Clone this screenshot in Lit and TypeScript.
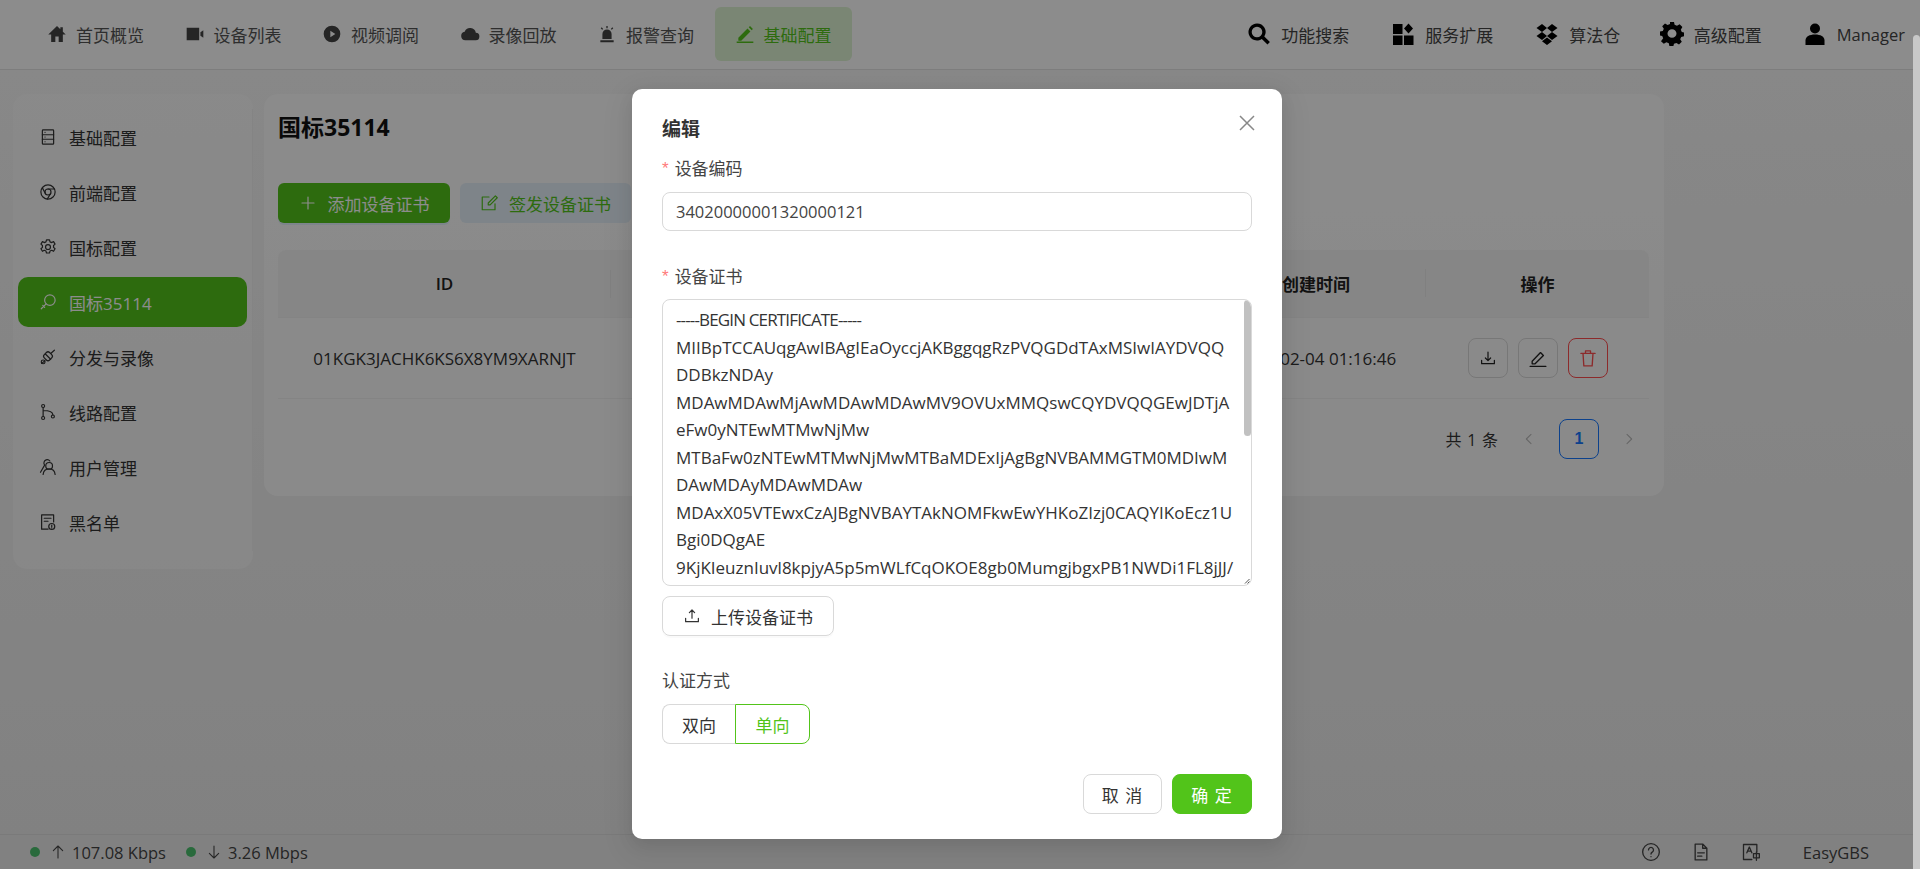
import { LitElement, html, css, svg } from "lit";
import { customElement } from "lit/decorators.js";

const fill = (inner: unknown, size = 20) => html`<svg class="ic" width=${size} height=${size} viewBox="0 0 24 24" fill="currentColor">${inner}</svg>`;
const line = (inner: unknown, size = 18) => html`<svg class="ic" width=${size} height=${size} viewBox="0 0 24 24" fill="none" stroke="currentColor" stroke-width="1.6" stroke-linecap="round" stroke-linejoin="round">${inner}</svg>`;

const nav = [
  ["首页概览", fill(svg`<path d="M12 2.5 1.5 12.5H5V21.5h5v-6.5h4v6.5h5V12.5h3.5L19 9.2V4h-3v2.4z"/>`)],
  ["设备列表", fill(svg`<path d="M2 4.5h15v15H2z"/><path d="M18.5 10 22 7.5v9L18.5 14z"/>`)],
  ["视频调阅", fill(svg`<path fill-rule="evenodd" d="M12 2a10 10 0 1 0 0 20 10 10 0 0 0 0-20zM10 8l6 4-6 4z"/>`)],
  ["录像回放", fill(svg`<path d="M19 10.5A7 7 0 0 0 5.6 9.2 5.2 5.2 0 0 0 6.5 19.5h12a4.5 4.5 0 0 0 .5-9z"/>`)],
  ["报警查询", fill(svg`<path fill-rule="evenodd" d="M6.500 18V12a5.500 5.500 0 0 1 11 0v6zM4 19.500h16V22H4z"/><path d="M11.200 2.500h1.600V5h-1.600zM4.500 5l1.200-1 1.700 2-1.200 1zM19.500 5l-1.200-1-1.700 2 1.200 1z"/>`)],
  ["基础配置", fill(svg`<path d="M4 16.500 15 5.500l3.500 3.500L7.500 20H4zM16.500 4l1.500-1.500L21.500 6 20 7.500z" /><path d="M2 21h20v1.800H2z"/>`)],
];
const navRight = [
  ["功能搜索", fill(svg`<path fill-rule="evenodd" d="M10 1.500a8.500 8.500 0 1 0 4.800 15.500l5.700 5.500 2.400-2.400-5.600-5.600A8.500 8.500 0 0 0 10 1.500zm0 3.200a5.300 5.300 0 1 1 0 10.600 5.300 5.300 0 0 1 0-10.600z"/>`, 24)],
  ["服务扩展", fill(svg`<path d="M2 2h9.500v10H2zM2 13.500h9.500V23H2zM13 13.500h9.500V23H13zM17.500 1.500l4.500 5-4.500 5-4.500-5z"/>`, 24)],
  ["算法仓", fill(svg`<path d="M7 2 1.500 6 7 10l5-4zM17 2l-5 4 5 4 5.500-4zM1.500 14 7 18l5-4-5-4zM22.500 14 17 10l-5 4 5 4zM12 15.500l-5 3.800 5 3.700 5-3.700z"/>`, 24)],
  ["高级配置", fill(svg`<path fill-rule="evenodd" d="M10 1h4l.6 3 2.400 1 2.600-1.600 2.800 2.800L20.800 9l1 2.400 2.200.6v4l-2.800.6-1 2.400 1.600 2.600-2.800 2.800-2.600-1.600-2.400 1-.6 2.200h-4l-.6-2.800-2.400-1-2.600 1.600-2.800-2.800L3.200 18l-1-2.400L0 15v-4l2.800-.6 1-2.400L2.200 5.400 5 2.600 7.600 4.200 10 3.200zM12 8.500a4.500 4.500 0 1 0 0 9 4.500 4.500 0 0 0 0-9z" transform="translate(0 -1) scale(1 .96)"/>`, 24)],
  ["Manager", fill(svg`<circle cx="12" cy="6.500" r="5"/><path d="M2.500 23v-4.500c0-4 4-6 9.500-6s9.500 2 9.500 6V23z"/>`, 24)],
];
const side = [
  ["基础配置", line(svg`<rect x="4.500" y="2.500" width="15" height="19" rx="1"/><path d="M4.500 9h15M4.500 15h15M8 5.800h.1M8 12h.1M8 18.300h.1"/>`)],
  ["前端配置", line(svg`<circle cx="12" cy="12" r="9.500"/><circle cx="12" cy="12" r="4"/><path d="M12 8h8.500M8.500 14 4.500 6.500M15.500 14l-4.500 7.500"/>`)],
  ["国标配置", line(svg`<path d="M10 2.500h4l.7 2.600 2.300 1 2.400-1.300 2 3.400-2 1.800v2.500l2 1.800-2 3.400-2.400-1.300-2.300 1-.7 2.600h-4l-.7-2.600-2.300-1-2.400 1.300-2-3.400 2-1.800V10l-2-1.800 2-3.400 2.400 1.300 2.300-1z"/><circle cx="12" cy="12" r="3.300"/>`)],
  ["国标35114", line(svg`<circle cx="14.500" cy="9.500" r="7"/><path d="M9.500 14.500 3 21M5 16.500l2.500 2.500"/>`)],
  ["分发与录像", line(svg`<path d="M8.500 8 15.500 15M8 17 3.500 20.500M16 7l4.500-4"/><rect x="7" y="6" width="10" height="10" rx="3" transform="rotate(-45 12 11)"/><circle cx="5.500" cy="18.500" r="2.500"/>`)],
  ["线路配置", line(svg`<circle cx="5.500" cy="4" r="2"/><circle cx="5.500" cy="20" r="2"/><circle cx="18.500" cy="18" r="2"/><path d="M5.500 6v12M5.500 10c6 0 13 1 13 6"/>`)],
  ["用户管理", line(svg`<circle cx="13.500" cy="10.500" r="4.500"/><path d="M5.500 22c.5-5 3.500-7.500 8-7.500s7.500 2.500 8 7.500M9.500 2.500a4.500 4.500 0 0 1 5 1.500M9.500 2.500a4.500 4.500 0 0 0-2 7L2 19"/>`)],
  ["黑名单", line(svg`<path d="M12 21.500H3.500v-19h16V12M7 7h9M7 11h5"/><circle cx="17" cy="18" r="4"/><path d="M17 16v2.500M17 20v.1"/>`)],
];
const cert = [
  "-----BEGIN CERTIFICATE-----",
  "MIIBpTCCAUqgAwIBAgIEaOyccjAKBggqgRzPVQGDdTAxMSIwIAYDVQQ",
  "DDBkzNDAy",
  "MDAwMDAwMjAwMDAwMDAwMV9OVUxMMQswCQYDVQQGEwJDTjA",
  "eFw0yNTEwMTMwNjMw",
  "MTBaFw0zNTEwMTMwNjMwMTBaMDExIjAgBgNVBAMMGTM0MDIwM",
  "DAwMDAyMDAwMDAw",
  "MDAxX05VTEwxCzAJBgNVBAYTAkNOMFkwEwYHKoZIzj0CAQYIKoEcz1U",
  "Bgi0DQgAE",
  "9KjKIeuznIuvl8kpjyA5p5mWLfCqOKOE8gb0MumgjbgxPB1NWDi1FL8jJJ/",
];

@customElement("app-root")
export class AppRoot extends LitElement {
  static styles = css`
    :host { display: block; width: 1920px; height: 869px; overflow: hidden; position: relative; background: #f3f3f3;
      font-family: "Open Sans", "Noto Sans CJK SC", sans-serif; color: #333; font-size: 17px; }
    * { box-sizing: border-box; }
    .ic { display: block; flex: none; }
    .page { height: 869px; display: flex; flex-direction: column; }
    header { height: 70px; flex: none; background: #fff; border-bottom: 1px solid #e4e4e4; display: flex; justify-content: space-between; padding: 7px 15px 0 27px; }
    .left, .right { display: flex; height: 54px; }
    .nav { width: 137.500px; display: flex; align-items: center; padding-left: 20px; gap: 9px; border-radius: 6px; color: #555; white-space: nowrap; }
    .nav .ic { color: #444; }
    .nav.on { background: #dff5d3; color: #52c41a; }
    .nav.on .ic { color: #52c41a; }
    .rnav { display: flex; align-items: center; gap: 10px; color: #444; white-space: nowrap; padding-right: 42px; }
    .rnav:nth-child(3) { padding-right: 39.500px; }
    .rnav:nth-child(4) { padding-right: 41px; }
    .rnav:last-child { padding-right: 0; font-size: 16.500px; }
    .rnav .ic { color: #000; }
    main { flex: 1; display: flex; gap: 11px; padding: 24px 0 0 13px; align-items: flex-start; background: linear-gradient(#f7f7f7, #ececec); }
    .sidebar { width: 240px; height: 475px; background: rgba(255,255,255,.45); border-radius: 14px; padding: 18px 5px 0; display: flex; flex-direction: column; gap: 5px; flex: none; position: relative; }
    .sidebar::after { content: ""; position: absolute; right: 0; top: 15px; bottom: 18px; width: 1px; background: #f0f0f0; }
    .mi { height: 50px; display: flex; align-items: center; gap: 12px; padding-left: 21px; border-radius: 10px; color: #333; width: 229px; flex: none; }
    .mi.on { background: #52c41a; color: #fff; }
    .card { width: 1400px; height: 402px; background: rgba(255,255,255,.75); border-radius: 14px; padding: 18px 14px 0; flex: none; }
    h2 { margin: 0; font-size: 23px; font-weight: 700; line-height: 30px; color: #111; }
    .tools { display: flex; gap: 10px; margin-top: 41px; }
    .btn { height: 40px; border-radius: 6px; display: flex; align-items: center; justify-content: center; gap: 11px; }
    .add { width: 172px; background: #52c41a; color: #fff; box-shadow: 0 2px 0 rgba(5,145,255,.1); }
    .sign { width: 171px; background: #e6f0fa; color: #52c41a; }
    .table { margin-top: 27px; width: 1371px; }
    .tr { display: grid; grid-template-columns: 333px 595px 220px 223px; align-items: center; text-align: center; }
    .th { height: 68px; background: #f5f5f5; border-bottom: 1px solid #f0f0f0; font-weight: 600; color: #222; border-radius: 8px 8px 0 0; }
    .th > div { position: relative; min-height: 24px; }
    .th > div:not(:last-child)::after { content: ""; position: absolute; right: 0; top: -2px; height: 28px; width: 1px; background: #eaeaea; }
    .td { height: 81px; border-bottom: 1px solid #f0f0f0; color: #333; }
    .ops { display: flex; gap: 10px; justify-content: center; padding-left: 1px; margin-top: -1px; }
    .op { width: 40px; height: 40px; border: 1px solid #d9d9d9; border-radius: 8px; display: flex; align-items: center; justify-content: center; color: #222; }
    .op.del { border-color: #ff4d4f; color: #ff4d4f; }
    .pager { display: flex; align-items: center; height: 40px; margin-top: 20px; justify-content: flex-end; color: #333; padding-right: 11px; font-size: 16px; }
    .pager .total { margin-right: 21px; word-spacing: 1.500px; }
    .chev { width: 20px; display: flex; justify-content: center; color: #bbb; }
    .cur { width: 40px; height: 40px; border: 1px solid #1677ff; color: #1677ff; border-radius: 8px; display: flex; align-items: center; justify-content: center; font-weight: 600; margin: 0 20px; font-family: "Liberation Sans", sans-serif; font-size: 16px; }
    footer { height: 35px; flex: none; background: #ececec; border-top: 1px solid #dedede; display: flex; justify-content: space-between; align-items: center; padding: 0 51px 0 30px; color: #444; font-weight: 500; font-size: 16.500px; }
    .fl, .fr { display: flex; align-items: center; }
    .dot { width: 10px; height: 10px; border-radius: 50%; background: #4cc26e; margin-right: 10px; }
    .rate { display: flex; align-items: center; gap: 6px; margin-right: 20px; }
    .fr .ic { color: #444; margin-right: 30px; }
    .fr .brand { margin-left: 12px; font-weight: 500; }

    .mask { position: absolute; inset: 0; background: rgba(0,0,0,.45); display: flex; justify-content: center; align-items: flex-start; padding: 89px 6px 0 0; }
    .modal { width: 650px; height: 750px; background: #fff; border-radius: 10px; padding: 30px; position: relative; box-shadow: 0 6px 16px rgba(0,0,0,.08), 0 9px 28px 8px rgba(0,0,0,.05); display: flex; flex-direction: column; }
    .close { position: absolute; right: 25px; top: 24px; color: #888; }
    .title { font-size: 19px; font-weight: 700; line-height: 20px; color: #333; }
    .label { display: flex; align-items: center; gap: 6px; color: #444; line-height: 24px; height: 24px; flex: none; }
    .label i { color: #ff7a7a; font-style: normal; font-family: "Liberation Sans", sans-serif; font-size: 17px; }
    .l1 { margin-top: 18px; }
    .input { margin-top: 11px; height: 39px; border: 1px solid #d9d9d9; border-radius: 8px; display: flex; align-items: center; padding: 0 13px; color: #444; flex: none; font-size: 16.500px; }
    .l2 { margin-top: 34px; }
    .area { margin-top: 10px; height: 287px; border: 1px solid #d9d9d9; border-radius: 8px; padding: 6px 13px 0; overflow: hidden; position: relative; flex: none; color: #333; }
    .ln { line-height: 27.500px; white-space: nowrap; }
    .ln.head { letter-spacing: -.85px; }
    .thumb { position: absolute; right: 0; top: 0; width: 7px; height: 136px; background: #c1c1c1; border-radius: 4px; }
    .grip { position: absolute; right: 1px; bottom: 1px; width: 6px; height: 6px; }
    .upload { margin-top: 10px; width: 172px; height: 40px; border: 1px solid #d9d9d9; border-radius: 8px; display: flex; align-items: center; justify-content: center; gap: 10px; color: #333; flex: none; box-shadow: 0 2px 0 rgba(0,0,0,.02); }
    .l3 { margin-top: 33px; }
    .radio { margin-top: 11px; display: flex; width: 148px; height: 40px; flex: none; }
    .radio div { display: flex; align-items: center; justify-content: center; border: 1px solid #d9d9d9; }
    .radio .a { width: 73px; border-right: none; border-radius: 8px 0 0 8px; color: #333; }
    .radio .b { width: 75px; border-color: #52c41a; color: #52c41a; border-radius: 0 8px 8px 0; }
    .foot { display: flex; justify-content: flex-end; gap: 10px; margin-top: 30px; }
    .foot div { height: 40px; width: 79px; border: 1px solid #d9d9d9; border-radius: 8px; display: flex; align-items: center; justify-content: center; letter-spacing: 1px; color: #333; }
    .foot .ok { width: 80px; background: #52c41a; border-color: #52c41a; color: #fff; }
    .sb { position: absolute; right: 0; top: 35px; bottom: 0; width: 7px; background: #c8c8c8; border-radius: 4px 4px 0 0; }
  `;

  render() {
    return html`
      <div class="page">
        <header>
          <div class="left">
            ${nav.map(([t, i], n) => html`<div class="nav ${n === 5 ? "on" : ""}">${i}<span>${t}</span></div>`)}
          </div>
          <div class="right">
            ${navRight.map(([t, i]) => html`<div class="rnav">${i}<span>${t}</span></div>`)}
          </div>
        </header>
        <main>
          <aside class="sidebar">
            ${side.map(([t, i], n) => html`<div class="mi ${n === 3 ? "on" : ""}">${i}<span>${t}</span></div>`)}
          </aside>
          <section class="card">
            <h2>国标35114</h2>
            <div class="tools">
              <div class="btn add">${line(svg`<path d="M12 4v16M4 12h16"/>`, 18)}<span>添加设备证书</span></div>
              <div class="btn sign">${line(svg`<path d="M20 13v8H3V4h9M20.500 2.500 11 12v2.500h2.500L23 5z"/>`, 18)}<span>签发设备证书</span></div>
            </div>
            <div class="table">
              <div class="tr th"><div>ID</div><div></div><div>创建时间</div><div>操作</div></div>
              <div class="tr td">
                <div>01KGK3JACHK6KS6X8YM9XARNJT</div>
                <div></div>
                <div>2026-02-04 01:16:46</div>
                <div class="ops">
                  <div class="op">${line(svg`<path d="M12 4v11M8.500 12l3.500 3.500 3.500-3.500M3.500 15v4.500h17V15"/>`, 18)}</div>
                  <div class="op">${line(svg`<path d="M5 16 15 5.500 18.500 9 8.500 19H5zM2.500 22h19"/>`, 20)}</div>
                  <div class="op del">${line(svg`<path d="M3.500 6.500h17M9 6.500v-3h6v3M6 6.500l1 15h10l1-15"/>`, 20)}</div>
                </div>
              </div>
            </div>
            <div class="pager">
              <span class="total">共 1 条</span>
              <span class="chev">${line(svg`<path d="M15 5l-7 7 7 7"/>`, 16)}</span>
              <span class="cur">1</span>
              <span class="chev">${line(svg`<path d="M9 5l7 7-7 7"/>`, 16)}</span>
            </div>
          </section>
        </main>
        <footer>
          <div class="fl">
            <span class="dot"></span>
            <span class="rate">${line(svg`<path d="M12 21V3M5 10l7-7 7 7"/>`, 16)}<span>107.08 Kbps</span></span>
            <span class="dot"></span>
            <span class="rate">${line(svg`<path d="M12 3v18M5 14l7 7 7-7"/>`, 16)}<span>3.26 Mbps</span></span>
          </div>
          <div class="fr">
            ${line(svg`<circle cx="12" cy="12" r="10"/><path d="M9 9.500a3 3 0 1 1 4.500 2.600c-1 .6-1.500 1.200-1.500 2.400M12 17.500v.1"/>`, 20)}
            ${line(svg`<path d="M5 2.500h9l5 5v14H5zM14 2.500v5h5M8 13h8M8 17h5"/>`, 20)}
            ${line(svg`<path d="M19 12V3H3v18h10M7 13l3-7 3 7M8 11h4"/><rect x="15" y="14" width="7" height="5"/><path d="M18.500 12v10"/>`, 20)}
            <span class="brand">EasyGBS</span>
          </div>
        </footer>
      </div>
      <div class="mask">
        <div class="modal">
          <span class="close">${html`<svg class="ic" width="20" height="20" viewBox="0 0 20 20" fill="none" stroke="currentColor" stroke-width="1.500"><path d="M3 3l14 14M17 3 3 17"/></svg>`}</span>
          <div class="title">编辑</div>
          <div class="label l1"><i>*</i><span>设备编码</span></div>
          <div class="input">34020000001320000121</div>
          <div class="label l2"><i>*</i><span>设备证书</span></div>
          <div class="area">
            ${cert.map((l, n) => html`<div class="ln ${n === 0 ? "head" : ""}">${l}</div>`)}
            <span class="thumb"></span>
            <svg class="grip" viewBox="0 0 6 6" stroke="#555" stroke-width="1"><path d="M1 5.500 5.500 1M3.500 5.500l2-2"/></svg>
          </div>
          <div class="upload">${line(svg`<path d="M12 15V4M8.500 7.500 12 4l3.500 3.500M3.500 15v4.500h17V15"/>`, 18)}<span>上传设备证书</span></div>
          <div class="label l3"><span>认证方式</span></div>
          <div class="radio"><div class="a">双向</div><div class="b">单向</div></div>
          <div class="foot"><div>取 消</div><div class="ok">确 定</div></div>
        </div>
        <span class="sb"></span>
      </div>
    `;
  }
}
